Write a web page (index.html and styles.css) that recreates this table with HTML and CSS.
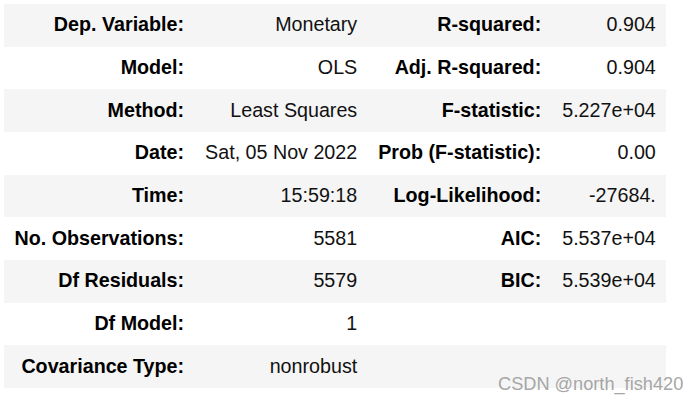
FILE: index.html
```html
<!DOCTYPE html>
<html>
<head>
<meta charset="utf-8">
<link rel="stylesheet" href="styles.css">
</head>
<body>
<table class="summary">
  <tr><th>Dep. Variable:</th><td>Monetary</td><th>R-squared:</th><td>0.904</td></tr>
  <tr><th>Model:</th><td>OLS</td><th>Adj. R-squared:</th><td>0.904</td></tr>
  <tr><th>Method:</th><td>Least Squares</td><th>F-statistic:</th><td>5.227e+04</td></tr>
  <tr><th>Date:</th><td>Sat, 05 Nov 2022</td><th>Prob (F-statistic):</th><td>0.00</td></tr>
  <tr><th>Time:</th><td>15:59:18</td><th>Log-Likelihood:</th><td>-27684.</td></tr>
  <tr><th>No. Observations:</th><td>5581</td><th>AIC:</th><td>5.537e+04</td></tr>
  <tr><th>Df Residuals:</th><td>5579</td><th>BIC:</th><td>5.539e+04</td></tr>
  <tr><th>Df Model:</th><td>1</td><th></th><td></td></tr>
  <tr><th>Covariance Type:</th><td>nonrobust</td><th></th><td></td></tr>
</table>
<div class="watermark">CSDN @north_fish420</div>
</body>
</html>
```
FILE: styles.css
```css
html, body {
  margin: 0;
  background: #ffffff;
}
body {
  padding: 4px;
  position: relative;
  width: 699px;
  height: 405px;
  box-sizing: border-box;
  font-family: "Liberation Sans", Arial, sans-serif;
}
.summary {
  border-collapse: collapse;
  border-spacing: 0;
  font-size: 19.7px;
  color: #000;
}
.summary tr {
  height: 42.67px;
}
.summary tr:nth-child(odd) {
  background: #f5f5f5;
}
.summary th,
.summary td {
  padding: 0 10.5px;
  text-align: right;
  vertical-align: middle;
  white-space: nowrap;
  line-height: 1;
}
.summary th {
  font-weight: bold;
}
.summary td {
  font-weight: normal;
  color: #111;
}
.watermark {
  position: absolute;
  left: 498px;
  top: 375px;
  font-size: 18.2px;
  line-height: 1;
  color: #a6a6a6;
  white-space: nowrap;
}
```
